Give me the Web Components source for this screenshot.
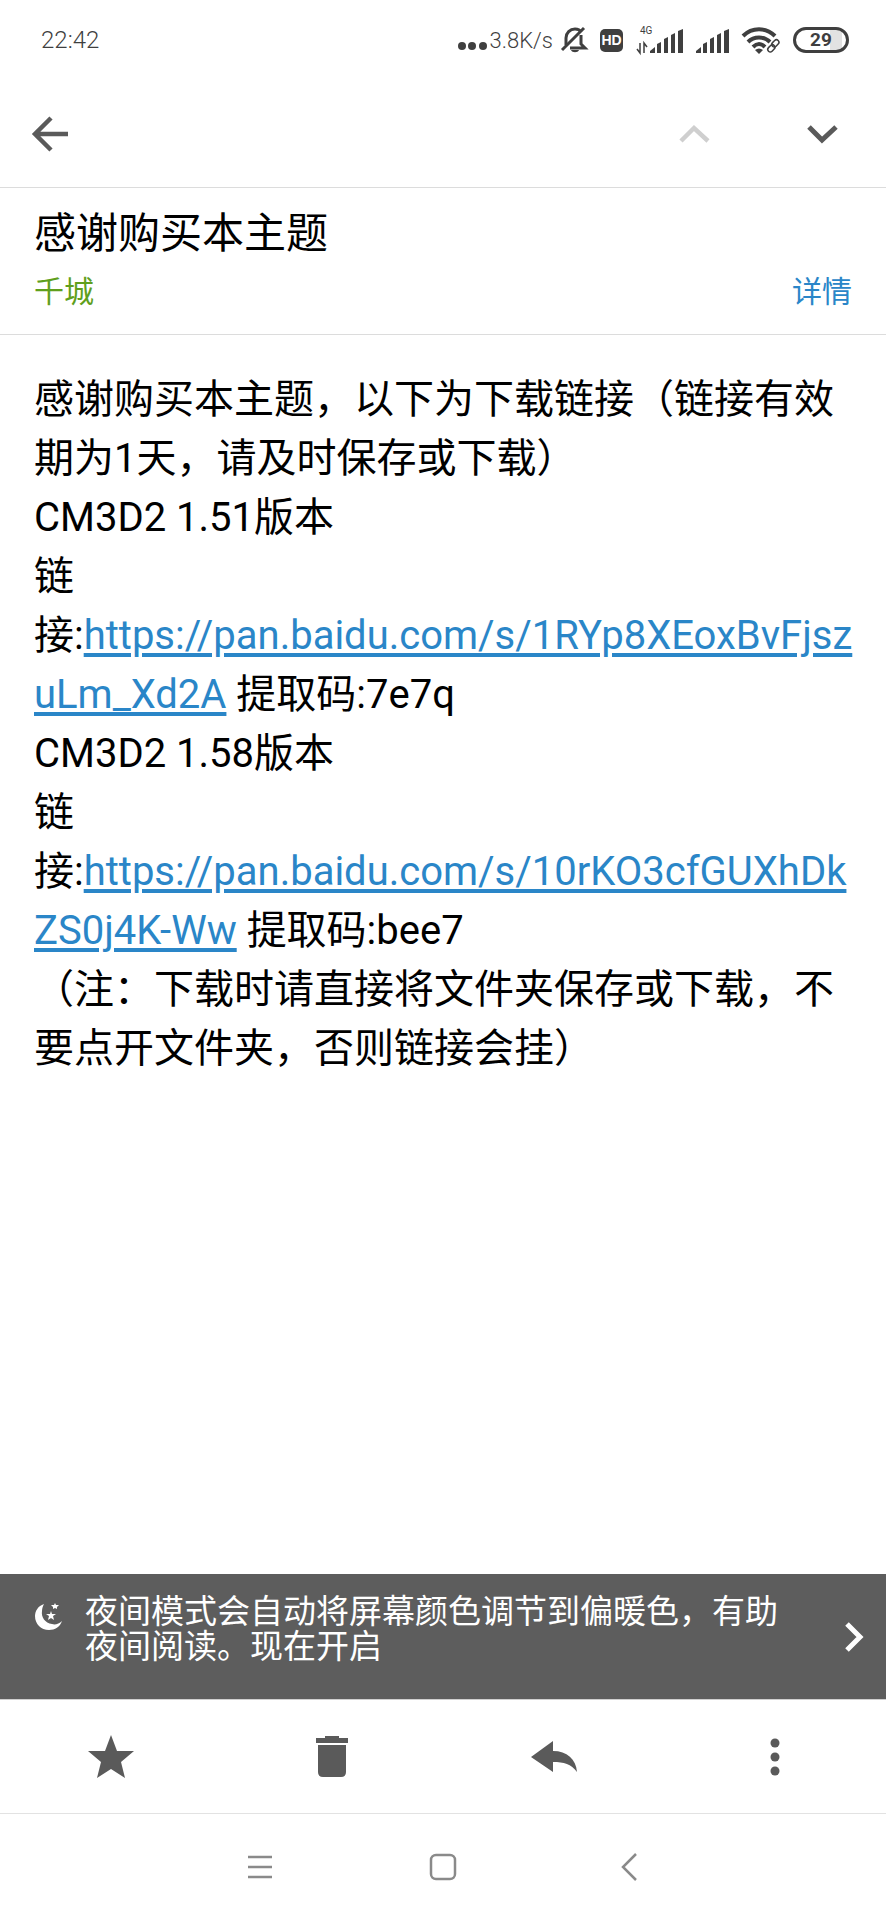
<!DOCTYPE html>
<html lang="zh-CN">
<head>
<meta charset="utf-8">
<meta name="viewport" content="width=device-width, initial-scale=1">
<title>感谢购买本主题</title>
<style>
  body {
    margin: 0;
    background: #fff;
    color: #000;
    font-family: Roboto, "Noto Sans CJK SC", sans-serif;
  }
</style>
</head>
<body>
<mail-app>
  <status-bar slot="top" time="22:42" speed="3.8K/s" battery="29"></status-bar>
  <mail-toolbar slot="top"></mail-toolbar>
  <mail-header slot="top" sender="千城">感谢购买本主题</mail-header>

  <mail-body>
    <div>感谢购买本主题，以下为下载链接（链接有效期为1天，请及时保存或下载）</div>
    <share-link version="CM3D2 1.51版本" href="https://pan.baidu.com/s/1RYp8XEoxBvFjszuLm_Xd2A" code="7e7q"></share-link>
    <share-link version="CM3D2 1.58版本" href="https://pan.baidu.com/s/10rKO3cfGUXhDkZS0j4K-Ww" code="bee7"></share-link>
    <div>（注：下载时请直接将文件夹保存或下载，不要点开文件夹，否则链接会挂）</div>
  </mail-body>

  <night-banner slot="bottom">夜间模式会自动将屏幕颜色调节到偏暖色，有助夜间阅读。现在开启</night-banner>
  <action-bar slot="bottom"></action-bar>
  <nav-bar slot="bottom"></nav-bar>
</mail-app>

<script>
// shared by every element: box sizing and plain buttons
const base = `
  * { box-sizing: border-box; }
  svg { display: block; flex: none; overflow: visible; }
  button {
    display: flex;
    align-items: center;
    justify-content: center;
    margin: 0;
    padding: 0;
    border: 0;
    background: none;
    color: inherit;
    font: inherit;
    cursor: pointer;
  }
`;

class BaseElement extends HTMLElement {
  constructor() {
    super();
    this.attachShadow({ mode: "open" });
  }

  connectedCallback() {
    this.shadowRoot.innerHTML = `<style>${base}${this.styles()}</style>${this.markup()}`;
  }
}

// page frame: top bars, growing content, bottom bars
class MailApp extends BaseElement {
  styles() {
    return `
      :host { display: flex; flex-direction: column; min-height: 100vh; }
      main { flex: 1; }
    `;
  }
  markup() {
    return `
      <slot name="top"></slot>
      <main><slot></slot></main>
      <slot name="bottom"></slot>
    `;
  }
}

// five bars that rise to the right
const bars = (x) => `
  <path fill="currentColor" d="M${x} 27v-2l5-4v6z
    M${x + 7} 27v-9l4-2v11z M${x + 14} 27v-14l4-2v16z
    M${x + 21} 27v-18l4-2v20z M${x + 28} 27v-22l5-2v24z"/>
`;

class StatusBar extends BaseElement {
  styles() {
    return `
      :host {
        display: flex;
        align-items: center;
        justify-content: space-between;
        height: 80px;
        padding: 0 37px 0 41px;
        color: #3f3f3f;
        font-size: 24px;
      }
      .time, .speed { font-weight: 300; }
      .right { display: flex; align-items: center; gap: 13px; }
      .net { display: flex; align-items: center; gap: 3px; }
      .speed { font-size: 22px; }
      .alerts { display: flex; align-items: center; gap: 8px; }
      .hd {
        width: 23px;
        border-radius: 5px;
        background: #3f3f3f;
        color: #fff;
        font: bold 14px/23px "Liberation Sans", sans-serif;
        text-align: center;
      }
      .battery {
        width: 56px;
        border: 3px solid #3f3f3f;
        border-radius: 13px;
        background: linear-gradient(90deg, #fff 34px, #e2e2e2 34px 46px, #fff 46px);
        font: bold 19px/20px Roboto, sans-serif;
        text-align: center;
      }
    `;
  }
  markup() {
    return `
      <span class="time">${this.getAttribute("time")}</span>
      <div class="right">
        <div class="alerts">
          <div class="net">
            <svg width="29" height="28" viewBox="0 0 29 28" fill="currentColor">
              <circle cx="4" cy="20" r="4"/><circle cx="14" cy="20" r="4"/><circle cx="25" cy="20" r="4"/>
            </svg>
            <span class="speed">${this.getAttribute("speed")}</span>
          </div>
          <svg width="26" height="28" viewBox="0 0 26 28" fill="none" stroke="currentColor" stroke-width="3">
            <path d="M5 19V12c0-5 4-9 9-9 3 0 5 1 6 3M20 9v9l4 4H9"/>
            <path d="M1 24L23 2"/>
            <path d="M10 24h8c-1 3-7 3-8 0z" fill="currentColor" stroke="none"/>
          </svg>
        </div>
        <span class="hd">HD</span>
        <svg width="47" height="28" viewBox="0 0 47 28">
          <text x="4" y="8" font-size="10" fill="currentColor">4G</text>
          <path d="M4 17v10l-3-4M8 27V17l3 4" fill="none" stroke="currentColor" stroke-width="1.5"/>
          ${bars(14)}
        </svg>
        <svg width="33" height="28" viewBox="0 0 33 28">${bars(0)}</svg>
        <svg width="38" height="28" viewBox="0 0 38 28" fill="none" stroke="currentColor" stroke-width="4">
          <path d="M1 10C10 1 24 1 33 10M6 16c6-6 16-6 22 0M11 21c4-4 8-4 12 0"/>
          <path d="M13 24q4-3 8 0l-4 4z" fill="currentColor" stroke="none"/>
          <path d="M28 26l8-10" stroke="#fff" stroke-width="10"/>
          <g stroke-width="1.5">
            <rect x="31" y="13" width="5" height="8" rx="2.5" transform="rotate(45 33 17)"/>
            <rect x="27" y="18" width="5" height="8" rx="2.5" transform="rotate(45 29 22)"/>
          </g>
        </svg>
        <span class="battery">${this.getAttribute("battery")}</span>
      </div>
    `;
  }
}

class MailToolbar extends BaseElement {
  styles() {
    return `
      :host {
        display: flex;
        align-items: center;
        justify-content: space-between;
        height: 107px;
        padding: 0 40px 0 32px;
        border-bottom: 1px solid #dcdcdc;
        color: #5a5a5a;
      }
      .pager { display: flex; gap: 80px; }
      button { height: 48px; }
      button:disabled { color: #cfcfcf; cursor: default; }
    `;
  }
  markup() {
    return `
      <button aria-label="返回">
        <svg width="36" height="36" viewBox="0 0 36 36" fill="none" stroke="currentColor" stroke-width="4.5">
          <path d="M19 2L3 18l16 16M3 18h33"/>
        </svg>
      </button>
      <div class="pager">
        <button aria-label="上一封" disabled>
          <svg width="48" height="20" viewBox="0 0 48 20" fill="none" stroke="currentColor" stroke-width="4.5">
            <path d="M11 17L24 4l14 13"/>
          </svg>
        </button>
        <button aria-label="下一封">
          <svg width="48" height="20" viewBox="0 0 48 20" fill="none" stroke="currentColor" stroke-width="5">
            <path d="M11 3l13 13L38 3"/>
          </svg>
        </button>
      </div>
    `;
  }
}

class MailHeader extends BaseElement {
  styles() {
    return `
      :host {
        display: block;
        padding: 20px 34px 22px;
        border-bottom: 1px solid #dcdcdc;
      }
      h1 { margin: 0; font-size: 42px; line-height: 52px; font-weight: 400; }
      .meta {
        display: flex;
        justify-content: space-between;
        margin-top: 12px;
        font-size: 30px;
        line-height: 40px;
      }
      .sender { color: #5f9f1c; }
      a { color: #2a86c8; text-decoration: none; }
    `;
  }
  markup() {
    return `
      <h1><slot></slot></h1>
      <div class="meta">
        <span class="sender">${this.getAttribute("sender")}</span>
        <a href="#details">详情</a>
      </div>
    `;
  }
}

class MailBody extends BaseElement {
  styles() {
    return `
      :host {
        display: block;
        padding: 35px 30px 35px 34px;
        font-size: 40px;
        line-height: 59px;
      }
    `;
  }
  markup() {
    return `<slot></slot>`;
  }
}

// version line plus a download link and its code
class ShareLink extends BaseElement {
  styles() {
    return `
      :host { display: block; }
      a {
        color: #2a86c8;
        text-decoration-thickness: 4px;
        text-underline-offset: 4px;
        word-break: break-all;
      }
    `;
  }
  markup() {
    const href = this.getAttribute("href");
    return `
      <div>${this.getAttribute("version")}</div>
      <div>链<br>接:<a href="${href}">${href}</a> 提取码:${this.getAttribute("code")}</div>
    `;
  }
}

class NightBanner extends BaseElement {
  styles() {
    return `
      :host { display: block; border-bottom: 1px solid #cfcfcf; background: #5d5d5d; color: #fff; }
      button {
        align-items: flex-start;
        justify-content: flex-start;
        width: 100%;
        padding: 20px 22px 35px 35px;
        font-size: 33px;
        line-height: 35px;
        text-align: left;
      }
      .moon { margin: 8px 22px 0 0; }
      .text { flex: 1; padding-right: 60px; }
      .go { align-self: center; margin-top: 15px; }
    `;
  }
  markup() {
    return `
      <button>
        <svg class="moon" width="28" height="28" viewBox="0 0 28 28" fill="currentColor">
          <path d="M9 2C3 4 0 9 0 14c0 8 6 14 14 14 6 0 11-3 13-9-3 3-7 4-10 3C10 21 6 15 7 9c0-3 1-5 2-7z"/>
          <path d="M16 9l1 3h4l-3 2 1 4-3-2-3 2 1-4-3-2h4zM20 1l1 2h3l-2 2v2l-2-1-2 1V5l-2-2h3z"/>
        </svg>
        <span class="text"><slot></slot></span>
        <svg class="go" width="20" height="30" viewBox="0 0 20 30" fill="none" stroke="currentColor" stroke-width="5">
          <path d="M3 2l13 13L3 28"/>
        </svg>
      </button>
    `;
  }
}

class ActionBar extends BaseElement {
  styles() {
    return `
      :host {
        display: grid;
        grid-template-columns: repeat(4, 1fr);
        height: 113px;
        border-bottom: 1px solid #e2e2e2;
        color: #5a5a5a;
      }
    `;
  }
  markup() {
    return `
      <button aria-label="星标">
        <svg width="46" height="44" viewBox="0 0 46 44" fill="currentColor">
          <path d="M23 0l6 16h17L33 27l4 16-14-9-14 9 4-16L0 16h17z"/>
        </svg>
      </button>
      <button aria-label="删除">
        <svg width="32" height="42" viewBox="0 0 32 42" fill="currentColor">
          <path d="M9 0h14v2h9v5H0V2h9zM2 9h28v27q0 5-5 5H7q-5 0-5-5z"/>
        </svg>
      </button>
      <button aria-label="回复">
        <svg width="46" height="32" viewBox="0 0 46 32" fill="currentColor">
          <path d="M0 16L22 0v10c14 0 23 8 24 21-6-8-13-10-24-10v10z"/>
        </svg>
      </button>
      <button aria-label="更多">
        <svg width="10" height="38" viewBox="0 0 10 38" fill="currentColor">
          <circle cx="5" cy="5" r="4.5"/><circle cx="5" cy="19" r="4.5"/><circle cx="5" cy="33" r="4.5"/>
        </svg>
      </button>
    `;
  }
}

class NavBar extends BaseElement {
  styles() {
    return `
      :host {
        display: grid;
        grid-template-columns: repeat(3, 1fr);
        height: 106px;
        padding: 0 19%;
        color: #8a8a8a;
      }
    `;
  }
  markup() {
    return `
      <button aria-label="菜单">
        <svg width="26" height="28" viewBox="0 0 26 28" fill="none" stroke="currentColor" stroke-width="2.5">
          <path d="M1 4h24M1 14h24M1 24h24"/>
        </svg>
      </button>
      <button aria-label="主页">
        <svg width="28" height="28" viewBox="0 0 28 28" fill="none" stroke="currentColor" stroke-width="2.5">
          <rect x="2" y="2" width="24" height="24" rx="5"/>
        </svg>
      </button>
      <button aria-label="后退">
        <svg width="28" height="28" viewBox="0 0 28 28" fill="none" stroke="currentColor" stroke-width="2.5">
          <path d="M24 1L11 14l13 13"/>
        </svg>
      </button>
    `;
  }
}

window.customElements.define("mail-app", MailApp);
window.customElements.define("status-bar", StatusBar);
window.customElements.define("mail-toolbar", MailToolbar);
window.customElements.define("mail-header", MailHeader);
window.customElements.define("mail-body", MailBody);
window.customElements.define("share-link", ShareLink);
window.customElements.define("night-banner", NightBanner);
window.customElements.define("action-bar", ActionBar);
window.customElements.define("nav-bar", NavBar);
</script>
</body>
</html>
